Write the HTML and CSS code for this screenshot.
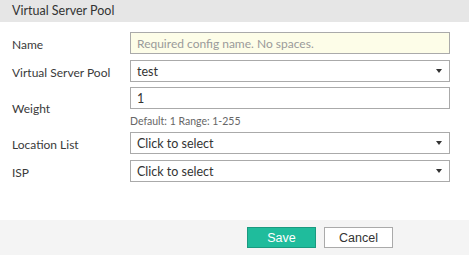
FILE: index.html
```html
<!DOCTYPE html>
<html>
<head>
<meta charset="utf-8">
<link rel="stylesheet" href="styles.css">
</head>
<body>
<div class="dialog">
  <div class="header">Virtual Server Pool</div>
  <div class="form">
    <div class="row r-name">
      <label class="label">Name</label>
      <div class="field"><div class="input required"><span class="placeholder">Required config name. No spaces.</span></div></div>
    </div>
    <div class="row r-pool">
      <label class="label">Virtual Server Pool</label>
      <div class="field"><div class="input select"><span>test</span><span class="caret"></span></div></div>
    </div>
    <div class="row r-weight">
      <label class="label">Weight</label>
      <div class="field">
        <div class="input"><span>1</span></div>
        <div class="hint">Default: 1 Range: 1-255</div>
      </div>
    </div>
    <div class="row r-loc">
      <label class="label">Location List</label>
      <div class="field"><div class="input select"><span>Click to select</span><span class="caret"></span></div></div>
    </div>
    <div class="row r-isp">
      <label class="label">ISP</label>
      <div class="field"><div class="input select"><span>Click to select</span><span class="caret"></span></div></div>
    </div>
  </div>
  <div class="footer">
    <button class="btn save">Save</button>
    <button class="btn cancel">Cancel</button>
  </div>
</div>
</body>
</html>
```

FILE: styles.css
```css
html, body {
  margin: 0;
  padding: 0;
  background: #ffffff;
}
body {
  font-family: Lato, "Open Sans", sans-serif;
  font-size: 12px;
  color: #3a3a3a;
}
.dialog {
  width: 469px;
  height: 255px;
  display: flex;
  flex-direction: column;
}
.header {
  height: 22px;
  line-height: 22px;
  background: #e6e6e6;
  padding-left: 12px;
  color: #333333;
  font-size: 12.5px;
}
.form {
  flex: 1;
  padding: 10px 0 0 12px;
}
.row {
  display: flex;
  align-items: center;
}
.r-name { margin-bottom: 6px; }
.r-pool { margin-bottom: 5px; }
.r-weight { margin-bottom: 5px; }
.r-loc { margin-bottom: 6px; }
.label {
  width: 118px;
  padding-top: 3px;
  color: #3a3a3a;
}
.field {
  width: 320px;
}
.input {
  box-sizing: border-box;
  height: 22px;
  border: 1px solid #aaaaaa;
  padding: 0 6px;
  display: flex;
  align-items: center;
  justify-content: space-between;
  background: #ffffff;
  color: #333333;
  font-size: 12.5px;
}
.input.required {
  background: #fdfde8;
}
.placeholder {
  color: #9a9a9a;
  font-size: 12px;
}
.caret {
  width: 0;
  height: 0;
  border-left: 3px solid transparent;
  border-right: 3px solid transparent;
  border-top: 4px solid #333333;
  margin-right: 1px;
}
.hint {
  margin-top: 6px;
  font-size: 10.5px;
  line-height: 12px;
  color: #666666;
}
.footer {
  height: 35px;
  background: #f4f4f4;
  display: flex;
  align-items: center;
  padding-left: 247px;
  gap: 8px;
}
.btn {
  box-sizing: border-box;
  width: 69px;
  height: 21px;
  font-family: "Liberation Sans", Arial, sans-serif;
  font-size: 12.5px;
  padding: 0;
  cursor: pointer;
}
.save {
  background: #1fbc9c;
  border: 1px solid #1a9a80;
  color: #ffffff;
}
.cancel {
  background: #ffffff;
  border: 1px solid #aaaaaa;
  color: #333333;
}
```
